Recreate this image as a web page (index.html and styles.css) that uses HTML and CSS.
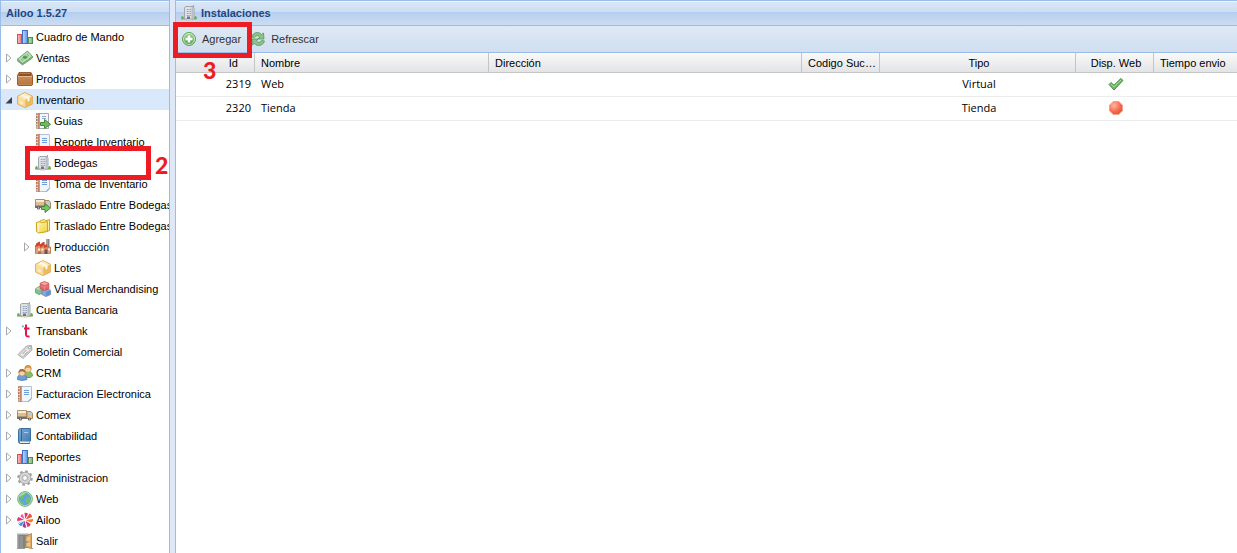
FILE: index.html
```html
<!DOCTYPE html>
<html lang="es">

<head>
  <meta charset="UTF-8" />
  <meta name="viewport" content="width=device-width, initial-scale=1" />
  <title>Ailoo</title>
  <link rel="stylesheet" href="styles.css">
</head>

<body>

  <!-- Icon set -->
  <svg class="sprite" aria-hidden="true">
    <defs>
      <linearGradient id="gGreen" x1="0" y1="0" x2="0" y2="1"><stop offset="0" stop-color="#a5d79b" /><stop offset="1" stop-color="#4fa04c" /></linearGradient>
      <linearGradient id="gBrown" x1="0" y1="0" x2="0" y2="1"><stop offset="0" stop-color="#cf9a66" /><stop offset="1" stop-color="#b5733e" /></linearGradient>
      <linearGradient id="gYellow" x1="0" y1="0" x2="1" y2="1"><stop offset="0" stop-color="#fff8b0" /><stop offset="1" stop-color="#f2d03e" /></linearGradient>
      <linearGradient id="gBlue" x1="0" y1="0" x2="1" y2="1"><stop offset="0" stop-color="#7dabd6" /><stop offset="1" stop-color="#3e77ad" /></linearGradient>
      <linearGradient id="gBarRed" x1="0" y1="0" x2="1" y2="0"><stop offset="0" stop-color="#fbc5c5" /><stop offset="1" stop-color="#f07070" /></linearGradient>
      <linearGradient id="gBarBlue" x1="0" y1="0" x2="1" y2="0"><stop offset="0" stop-color="#c3dcfb" /><stop offset="1" stop-color="#5a94ea" /></linearGradient>
      <linearGradient id="gBarGreen" x1="0" y1="0" x2="1" y2="0"><stop offset="0" stop-color="#c4e6c0" /><stop offset="1" stop-color="#78b577" /></linearGradient>
      <radialGradient id="gRed" cx=".35" cy=".3" r=".8"><stop offset="0" stop-color="#ffb8a2" /><stop offset=".6" stop-color="#f8694b" /><stop offset="1" stop-color="#e8492c" /></radialGradient>
    </defs>
    <symbol id="i-chart" viewBox="0 0 16 16">
      <rect x=".5" y="5.500" width="4" height="9" fill="url(#gBarRed)" stroke="#e04a4a" />
      <rect x="5.500" y="1.500" width="5" height="13" fill="url(#gBarBlue)" stroke="#3f70cf" />
      <rect x="11.500" y="8.500" width="4" height="6" fill="url(#gBarGreen)" stroke="#538c58" />
    </symbol>
    <symbol id="i-money" viewBox="0 0 16 16">
      <path d="m.5 11 5 4 10-7V6.500l-10 7-5-4z" fill="#8dbd8b" stroke="#61a366" stroke-width=".8" />
      <path d="M.5 9 10.500 1l5 5.500-10 7z" fill="#a9cfa2" stroke="#63a568" stroke-width=".9" />
      <path d="M2.500 9 10.300 2.800l3.200 3.700-7.800 5.500z" fill="none" stroke="#d3ebcc" stroke-width=".8" />
      <ellipse cx="8" cy="7.300" rx="2.200" ry="1.800" fill="#539d5b" />
      <path d="m4.500 9.500 1 .7M10.500 4.500l1 .8" stroke="#5ba363" />
    </symbol>
    <symbol id="i-box" viewBox="0 0 16 16">
      <path d="M2 1.500h12l1.500 3V13q0 1.500-1.500 1.500H2Q.5 14.500.5 13V4.500z" fill="url(#gBrown)" stroke="#9b5d30" />
      <path d="M2.400 2h11.200l1.200 3H1.200z" fill="#8d5127" />
      <path d="M3 2.500h10" stroke="#b67a4c" />
      <path d="M1 5.500h14" stroke="#e6b988" />
      <path d="M1 13.500h14" stroke="#c58b5b" stroke-opacity=".7" />
    </symbol>
    <symbol id="i-package" viewBox="0 0 16 16">
      <path d="m8 .6 7.300 3.600v8L8 15.500.7 12.200v-8z" fill="#f5cf7f" stroke="#dba145" stroke-width=".9" />
      <path d="M1.200 4.700 8 8v7l-6.800-3z" fill="#fadd9c" />
      <path d="M14.800 4.700 8 8v7l6.800-3z" fill="#efba58" />
      <path d="m8 1 6.800 3.400L8 7.700 1.200 4.400z" fill="#ffebbb" />
      <path d="m8 8v7" stroke="#f7d38c" stroke-width=".6" />
      <path d="m3.700 3.200 6.800 3.300v3.200l2-.9V5.400L5.700 2.200z" fill="#fffaf0" />
      <path d="m3 9.200 3 1.400v1.700l-3-1.400z" fill="#fff3cf" />
    </symbol>
    <symbol id="i-notebook" viewBox="0 0 16 16">
      <path d="M3.500.5h11v12l-2.500 3H3.500z" fill="#f2f6fc" stroke="#b3c1d4" />
      <path d="M1 0h3.500v16H1z" fill="#d39b7e" />
      <path d="M4 0v16" stroke="#b57150" />
      <path d="M1.500 1.500v14" stroke="#995b40" stroke-dasharray="1 1" />
      <path d="M0 2.500h3M0 5.500h3M0 8.500h3M0 11.500h3M0 14h3" stroke="#ece7e4" stroke-width=".8" />
      <path d="M7 4.500h5M7 6.500h5M7 8.500h5" stroke="#6f9ddc" />
      <path d="m10.500 15.500 4-4v1.500l-2.500 2.500z" fill="#8ca8cf" />
    </symbol>
    <symbol id="i-guide" viewBox="0 0 16 16">
      <path d="M3.500.5h10v15h-10z" fill="#f4f6f9" stroke="#a3a6aa" />
      <path d="M1 0h3.500v16H1z" fill="#cfa48b" />
      <path d="M4 0v16" stroke="#a36f54" />
      <path d="M1.500 1.500v14" stroke="#865a45" stroke-dasharray="1 1" />
      <path d="M0 2.500h3M0 5.500h3M0 8.500h3M0 11.500h3M0 14h3" stroke="#e9e9e9" stroke-width=".8" />
      <path d="M7 3.500h4M7 5.500h4" stroke="#8caed8" />
      <path d="M5.500 9.500h4v-3l6 4.800-6 4.200v-3h-4z" fill="#74ba5c" stroke="#3f8a3d" />
    </symbol>
    <symbol id="i-building" viewBox="0 0 16 16">
      <path d="M1 13h14l1 2H0z" fill="#a9ca97" />
      <path d="M12.500 0v3" stroke="#bd7a7a" stroke-width=".8" />
      <path d="M3.500 2.500 5 1.500h7l1 1.500v11H3.500z" fill="#dde1e6" stroke="#a2a8b0" />
      <path d="M10.500 2h2v12h-2z" fill="#b9bec6" />
      <path d="M5 4.500h5M5 6.500h5M5 8.500h5M5 10.500h5" stroke="#97a5bb" />
      <path d="M5.500 3v9M8 3v8" stroke="#e8ebef" stroke-width=".6" />
      <path d="M6 11.500h3V14H6z" fill="#6b788c" />
      <path d="M0 14c0-4 3-4 3 0zM13 14c0-4 3-4 3 0z" fill="#6cae5d" />
      <path d="M5.500 14h5v1.500h-5z" fill="#d9cbb1" />
    </symbol>
    <symbol id="i-truck" viewBox="0 0 16 16">
      <path d="M.5 3.500h9v7h-9z" fill="#dfbd90" stroke="#a58864" stroke-width=".9" />
      <path d="M1 4h8v2H1z" fill="#f7ecd9" />
      <path d="M0 9.500h10v2.500H0z" fill="#77706a" />
      <path d="M10 4.500h4l1.500 2v5H10z" fill="#f2c784" stroke="#a57d4c" stroke-width=".9" />
      <path d="M11.500 5.500H14l1 3.500h-3.500z" fill="#a9cdee" />
      <circle cx="3.500" cy="12" r="1.600" fill="#55585c" /><circle cx="12.500" cy="12" r="1.600" fill="#55585c" />
      <circle cx="3.500" cy="12" r=".7" fill="#ddd" /><circle cx="12.500" cy="12" r=".7" fill="#ddd" />
    </symbol>
    <symbol id="i-truck-go" viewBox="0 0 16 16">
      <use href="#i-truck" y="-1" width="16" height="16" />
      <path d="M6.500 9.500H10v-3l5.500 4.600-5.500 4.400v-3H6.500z" fill="#7dc264" stroke="#3f8a3d" />
    </symbol>
    <symbol id="i-folder" viewBox="0 0 16 16">
      <path d="M5.500 3.500v-1l4-1 1 1.200 4-1v11l-9 2z" fill="#fdf0a0" stroke="#cfa41d" />
      <path d="M1.500 4.500 5 3.500l1.200 1.200 6.300-1.200v10L3.500 15l-2-1.500z" fill="url(#gYellow)" stroke="#cfa41d" />
      <path d="M3.500 6v8" stroke="#fff9ca" />
    </symbol>
    <symbol id="i-factory" viewBox="0 0 16 16">
      <path d="M11 0h3.500v9H11z" fill="#858585" /><path d="M12 0v9" stroke="#c4c4c4" />
      <path d="M.5 14.500V7L4 3.500l1 2.500 4-3v3.500l3-1v2.500h3.500v6.500z" fill="#e58b6a" stroke="#b7694c" stroke-width=".8" />
      <path d="m0 8 1.500-4L5 2.500v3L8.500 3l1 .5v3L12 5.500V8l-3 1V6.500L5 9V6.500z" fill="#cf4630" />
      <path d="M1 10.500h14v4H1z" fill="#daa27a" />
      <path d="M3 9.500h2v2H3zM6.500 9.500h2v2h-2zM13 9.500h2v2h-2z" fill="#fff2d2" />
      <path d="M9.500 10.500h3V15h-3z" fill="#6c5450" /><path d="M3 12.500h3V15H3z" fill="#b06d4c" />
    </symbol>
    <symbol id="i-cubes" viewBox="0 0 16 16">
      <path d="m4 5.500 4 1.700v5L4 13.500l-3.500-1.700v-4z" fill="#83be90" stroke="#5ba06b" stroke-width=".8" />
      <path d="m4 6 3.500 1.500L4 9 .8 7.700z" fill="#b3dbb8" />
      <path d="m11 7.500 4.500 1.700v4.300l-4.500 2-4-2V9z" fill="#87a9da" stroke="#5e84bb" stroke-width=".8" />
      <path d="m11 11 4-1.500v4L11 15z" fill="#6690cc" />
      <path d="m9.500.6 4.300 1.600v5.500l-4.300 2-4.300-2V2.200z" fill="#e26668" stroke="#cb4b4c" stroke-width=".8" />
      <path d="m9.500 1 3.900 1.500-3.900 1.700-3.900-1.700z" fill="#f4a6a1" />
      <path d="m9.500 4.500v4.800M6 5l3.500 1.500L13 5" fill="none" stroke="#f08b87" stroke-width=".7" />
    </symbol>
    <symbol id="i-transbank" viewBox="0 0 16 16">
      <path d="M9 1.500v10q0 2.500 3.500 2M7 5.500h5.500" fill="none" stroke="#d91a50" stroke-width="2" />
      <path d="M5 2.500h1.700v1.700H5z" fill="#5e9ad8" />
    </symbol>
    <symbol id="i-tag" viewBox="0 0 16 16">
      <path d="M1 10.500 9.500 2l5-.5.500 4.500L6 14.500z" fill="#dcdcdc" stroke="#a2a2a2" stroke-width=".9" />
      <path d="m3 10.500 7-6.800 3 2.700-7 6.600z" fill="#efefef" stroke="#c0c0c0" stroke-width=".7" />
      <path d="m5.500 10 4-4M7 11.500l4-4" stroke="#9c9c9c" />
      <circle cx="12.700" cy="3.700" r="1.200" fill="#fff" stroke="#999" stroke-width=".8" />
    </symbol>
    <symbol id="i-users" viewBox="0 0 16 16">
      <path d="M7 11q-.5-4.500 4-4.500t4.500 4.500l-2 1.500H8z" fill="#88bc68" stroke="#5e9749" stroke-width=".8" />
      <circle cx="11" cy="4" r="3.300" fill="#f9d3a4" stroke="#ce995d" stroke-width=".8" />
      <path d="M7.700 4.200Q7.500 0 11 0t3.300 4.200Q13 2.500 11 2.500T7.700 4.200z" fill="#d29344" />
      <path d="M.5 14.500q-.5-5 4.500-5t5 5q-5 2-9.500 0z" fill="#6c9fe0" stroke="#4677ba" stroke-width=".8" />
      <circle cx="5" cy="7.800" r="3.300" fill="#f9d3a4" stroke="#c08c59" stroke-width=".8" />
      <path d="M1.700 8Q1.500 4 5 4t3.300 4Q7 6.300 5 6.300T1.700 8z" fill="#a26b3e" />
    </symbol>
    <symbol id="i-book" viewBox="0 0 16 16">
      <path d="M1.500 2.500q0-2 2-2h10v12.500l-1 .5v2h-9q-2 0-2-2z" fill="url(#gBlue)" stroke="#3c6f9f" />
      <path d="M3 13.500h9.500V15H3z" fill="#eef1ea" />
      <path d="M4.500 1v12" stroke="#346592" />
      <path d="M6.500 3.500h5v2h-5z" fill="#a8cce9" stroke="#5a8dbb" stroke-width=".8" />
    </symbol>
    <symbol id="i-gear" viewBox="0 0 16 16">
      <circle cx="8" cy="8" r="6.600" fill="none" stroke="#a3a3a3" stroke-width="2.400" stroke-dasharray="2.600 2.584" />
      <circle cx="8" cy="8" r="4.100" fill="none" stroke="#a3a3a3" stroke-width="4.200" />
      <circle cx="8" cy="8" r="4.100" fill="none" stroke="#d8d8d8" stroke-width="2.700" />
      <circle cx="8" cy="8" r="3.300" fill="none" stroke="#bdbdbd" stroke-width=".7" />
    </symbol>
    <symbol id="i-globe" viewBox="0 0 16 16">
      <circle cx="8" cy="8" r="7.400" fill="#c0e5b5" stroke="#69b168" stroke-width=".9" />
      <circle cx="8" cy="8" r="6.200" fill="#5fa5dd" />
      <path d="M3 4q3-3 6-2L8 4 6 5l1 2-2 1-2-1zM10 7l3-1 1 2-2 4-2 1-1-3-1-1zM2.500 9 6 11l1 3q-3.500-1-4.500-5z" fill="#74bd6c" />
      <path d="M3 5.500q1.500-2.700 4.500-3" fill="none" stroke="#d4efd6" />
    </symbol>
    <symbol id="i-ailoo" viewBox="0 0 16 16">
      <path d="m8 8-1-7q3-1 4 1z" fill="#ee2f62" />
      <path d="m8 8 4-6.500q3 .5 3 3.500z" fill="#f4513c" />
      <path d="m8 8 8-1.500q.5 3-2 4z" fill="#f47a2d" />
      <path d="m8 8 5.500 3.500q0 3-3 3.500z" fill="#ee2f62" />
      <path d="m8 8 1.500 7.500q-3 .8-4-1.500z" fill="#963c9a" />
      <path d="M8 8 4.500 14q-3-.5-3-3z" fill="#3d8fd6" />
      <path d="M8 8 .5 9.500q-1-3 1-4.500z" fill="#e8327f" />
      <path d="M8 8 2 4q1-3 3.500-3z" fill="#fff" />
      <path d="M8 8 3.500 4.500q0-2 2-2.500z" fill="#ef5a95" />
      <path d="M8 8 7 1M8 8l4-6.500M8 8l8-1.500M8 8l5.500 3.500M8 8l1.500 7.500M8 8l-6.500 4M8 8 .5 9.500M8 8 2 4.500" stroke="#fff" stroke-width=".8" />
    </symbol>
    <symbol id="i-door" viewBox="0 0 16 16">
      <path d="M0 .5h12V15H0z" fill="#b0b0b0" /><path d="M1.500 2H10v13H1.500z" fill="#828282" />
      <path d="M2.500 3H6v12H2.500z" fill="#929292" />
      <path d="m8.500 3.500 6-3v15l-6-1.500z" fill="#dcaa6b" stroke="#b98447" stroke-width=".9" />
      <path d="m10 5 3-1.500v4L10 8zM10 10l3-.2v3.500l-3-.6z" fill="#ebc591" />
      <path d="M9 9h1.500" stroke="#8a6435" /><path d="M0 15h8v1H0zM14 15h2v1h-2z" fill="#999" />
    </symbol>
    <symbol id="i-add" viewBox="0 0 16 16">
      <circle cx="8" cy="8" r="6.500" fill="url(#gGreen)" stroke="#62a45d" />
      <circle cx="8" cy="8" r="5.500" fill="none" stroke="#d7efd0" stroke-width=".8" />
      <path d="M8 4.500v7M4.500 8h7" stroke="#fff" stroke-width="2.400" />
    </symbol>
    <symbol id="i-refresh" viewBox="0 0 16 16">
      <path d="M1.500 6Q3 1.500 7.500 1.500q2.500 0 4 2l2-1.500.5 6H8l1.500-2Q7 3 4.500 6.500z" fill="#8ac287" stroke="#57985a" stroke-width=".8" />
      <path d="M14.500 10Q13 14.500 8.500 14.500q-2.500 0-4-2l-2 1.500L2 8h6l-1.500 2Q9 13 11.500 9.500z" fill="#8ac287" stroke="#57985a" stroke-width=".8" />
    </symbol>
    <symbol id="i-tick" viewBox="0 0 16 16">
      <path d="m1 8.500 2-2 3 2.700L12.800 2.500l2.200 2-9 9.500z" fill="#72ba67" stroke="#43893f" stroke-width=".9" />
      <path d="m3 8 3 3 7-7" fill="none" stroke="#a2d894" />
    </symbol>
    <symbol id="i-stop" viewBox="0 0 16 16">
      <path d="M5.200 1.500h5.600l3.700 3.700v5.600l-3.700 3.700H5.200l-3.700-3.700V5.200z" fill="url(#gRed)" stroke="#eda294" />
    </symbol>
    <symbol id="i-closed" viewBox="0 0 16 16">
      <path d="M5.500 4v8l4.500-4z" fill="#fff" stroke="#a8a8a8" />
    </symbol>
    <symbol id="i-open" viewBox="0 0 16 16">
      <path d="M11 5v6.500H4.500z" fill="#404040" />
    </symbol>
  </svg>

  <nav class="sidebar" aria-label="Menú">
    <h2 class="panel-header">Ailoo 1.5.27</h2>
    <ul class="tree">
      <li><a href="#"><i class="icon"></i><svg class="icon"><use href="#i-chart" /></svg><span>Cuadro de Mando</span></a></li>
      <li><a href="#"><svg class="icon"><use href="#i-closed" /></svg><svg class="icon"><use href="#i-money" /></svg><span>Ventas</span></a></li>
      <li><a href="#"><svg class="icon"><use href="#i-closed" /></svg><svg class="icon"><use href="#i-box" /></svg><span>Productos</span></a></li>
      <li>
        <a href="#" class="selected"><svg class="icon"><use href="#i-open" /></svg><svg class="icon"><use href="#i-package" /></svg><span>Inventario</span></a>
        <ul>
          <li><a href="#"><i class="icon"></i><svg class="icon"><use href="#i-guide" /></svg><span>Guias</span></a></li>
          <li><a href="#"><i class="icon"></i><svg class="icon"><use href="#i-notebook" /></svg><span>Reporte Inventario</span></a></li>
          <li class="step">
            <a href="#"><i class="icon"></i><svg class="icon"><use href="#i-building" /></svg><span>Bodegas</span></a>
            <div class="mark mark-menu"></div>
            <b class="number number-menu">2</b>
          </li>
          <li><a href="#"><i class="icon"></i><svg class="icon"><use href="#i-notebook" /></svg><span>Toma de Inventario</span></a></li>
          <li><a href="#"><i class="icon"></i><svg class="icon"><use href="#i-truck-go" /></svg><span>Traslado Entre Bodegas</span></a></li>
          <li><a href="#"><i class="icon"></i><svg class="icon"><use href="#i-folder" /></svg><span>Traslado Entre Bodegas</span></a></li>
          <li><a href="#"><svg class="icon"><use href="#i-closed" /></svg><svg class="icon"><use href="#i-factory" /></svg><span>Producción</span></a></li>
          <li><a href="#"><i class="icon"></i><svg class="icon"><use href="#i-package" /></svg><span>Lotes</span></a></li>
          <li><a href="#"><i class="icon"></i><svg class="icon"><use href="#i-cubes" /></svg><span>Visual Merchandising</span></a></li>
        </ul>
      </li>
      <li><a href="#"><i class="icon"></i><svg class="icon"><use href="#i-building" /></svg><span>Cuenta Bancaria</span></a></li>
      <li><a href="#"><svg class="icon"><use href="#i-closed" /></svg><svg class="icon"><use href="#i-transbank" /></svg><span>Transbank</span></a></li>
      <li><a href="#"><i class="icon"></i><svg class="icon"><use href="#i-tag" /></svg><span>Boletin Comercial</span></a></li>
      <li><a href="#"><svg class="icon"><use href="#i-closed" /></svg><svg class="icon"><use href="#i-users" /></svg><span>CRM</span></a></li>
      <li><a href="#"><svg class="icon"><use href="#i-closed" /></svg><svg class="icon"><use href="#i-notebook" /></svg><span>Facturacion Electronica</span></a></li>
      <li><a href="#"><svg class="icon"><use href="#i-closed" /></svg><svg class="icon"><use href="#i-truck" /></svg><span>Comex</span></a></li>
      <li><a href="#"><svg class="icon"><use href="#i-closed" /></svg><svg class="icon"><use href="#i-book" /></svg><span>Contabilidad</span></a></li>
      <li><a href="#"><svg class="icon"><use href="#i-closed" /></svg><svg class="icon"><use href="#i-chart" /></svg><span>Reportes</span></a></li>
      <li><a href="#"><svg class="icon"><use href="#i-closed" /></svg><svg class="icon"><use href="#i-gear" /></svg><span>Administracion</span></a></li>
      <li><a href="#"><svg class="icon"><use href="#i-closed" /></svg><svg class="icon"><use href="#i-globe" /></svg><span>Web</span></a></li>
      <li><a href="#"><svg class="icon"><use href="#i-closed" /></svg><svg class="icon"><use href="#i-ailoo" /></svg><span>Ailoo</span></a></li>
      <li><a href="#"><i class="icon"></i><svg class="icon"><use href="#i-door" /></svg><span>Salir</span></a></li>
    </ul>
  </nav>

  <main class="content">
    <h1 class="panel-header"><svg class="icon"><use href="#i-building" /></svg>Instalaciones</h1>

    <div class="toolbar">
      <div class="step">
        <button type="button"><svg class="icon"><use href="#i-add" /></svg>Agregar</button>
        <div class="mark mark-button"></div>
        <b class="number number-button">3</b>
      </div>
      <button type="button"><svg class="icon"><use href="#i-refresh" /></svg>Refrescar</button>
    </div>

    <table class="grid">
      <colgroup>
        <col class="col-id">
        <col class="col-name">
        <col>
        <col class="col-small">
        <col class="col-type">
        <col class="col-small">
        <col class="col-time">
      </colgroup>
      <thead>
        <tr>
          <th class="id">Id</th>
          <th>Nombre</th>
          <th>Dirección</th>
          <th>Codigo Sucursal</th>
          <th class="center">Tipo</th>
          <th class="center">Disp. Web</th>
          <th>Tiempo envio</th>
        </tr>
      </thead>
      <tbody>
        <tr>
          <td class="id">2319</td>
          <td>Web</td>
          <td></td>
          <td></td>
          <td class="center">Virtual</td>
          <td class="center"><svg class="icon" role="img" aria-label="Sí"><use href="#i-tick" /></svg></td>
          <td></td>
        </tr>
        <tr>
          <td class="id">2320</td>
          <td>Tienda</td>
          <td></td>
          <td></td>
          <td class="center">Tienda</td>
          <td class="center"><svg class="icon" role="img" aria-label="No"><use href="#i-stop" /></svg></td>
          <td></td>
        </tr>
      </tbody>
    </table>
  </main>

</body>

</html>
```
FILE: styles.css
```css
* {
  box-sizing: border-box;
}

body {
  display: flex;
  gap: 5px;
  min-height: 100vh;
  margin: 0;
  background-color: #dfe8f6;
  color: #000;
  font-family: "Liberation Sans", Arial, sans-serif;
  font-size: 11px;
}

.sprite {
  position: absolute;
  width: 0;
  height: 0;
}

.icon {
  display: block;
  flex: none;
  width: 16px;
  height: 16px;
}

.panel-header {
  display: flex;
  align-items: center;
  gap: 4px;
  height: 26px;
  margin: 0;
  padding: 0 5px;
  border-top: 1px solid #99bce8;
  border-bottom: 1px solid #99bce8;
  background: linear-gradient(#dae7f6, #cddef3 45%, #b3cdee 46%, #b8cfee 51%, #cbddf3);
  box-shadow: inset 0 1px #f1f6fc;
  color: #1c4782;
  font-size: 11px;
  font-weight: bold;
}

/* Sidebar tree */
.sidebar {
  flex: none;
  width: 170px;
  border: solid #99bce8;
  border-width: 0 1px;
  background-color: #fff;
}

.tree,
.tree ul {
  margin: 0;
  padding: 0;
  list-style: none;
}

.tree {
  overflow: hidden;
}

.tree a {
  display: flex;
  align-items: center;
  height: 21px;
  color: #000;
  text-decoration: none;
  white-space: nowrap;
}

.tree a span {
  padding-left: 3px;
}

.tree ul a {
  padding-left: 18px;
}

.tree .selected {
  background-color: #d9e8fb;
}

/* Main panel */
.content {
  flex: 1;
  min-width: 0;
  border-left: 1px solid #99bce8;
  background-color: #fff;
}

.toolbar {
  display: flex;
  align-items: center;
  height: 27px;
  padding: 0 5px;
  gap: 9px;
  border-bottom: 1px solid #99bce8;
  background: linear-gradient(#dfe9f5, #d0deef);
}

.toolbar button {
  display: flex;
  align-items: center;
  gap: 5px;
  padding: 0;
  border: none;
  background: none;
  color: #333;
  font: inherit;
  cursor: pointer;
}

/* Grid */
.grid {
  width: 100%;
  table-layout: fixed;
  border-collapse: separate;
  border-spacing: 0;
}

.col-id {
  width: 79px;
}

.col-name {
  width: 234px;
}

.col-small {
  width: 78px;
}

.col-type {
  width: 196px;
}

.col-time {
  width: 83px;
}

.grid th {
  height: 20px;
  padding: 0 3px 0 6px;
  border-right: 1px solid #c5c5c5;
  border-bottom: 1px solid #c5c5c5;
  background: linear-gradient(#f9f9f9, #e3e4e6);
  font-weight: normal;
  text-align: left;
  white-space: nowrap;
  overflow: hidden;
  text-overflow: ellipsis;
}

.grid th:last-child {
  border-right: none;
}

.grid td {
  height: 24px;
  padding: 0 4px 2px 6px;
  border-bottom: 1px solid #ededed;
  font-family: "Open Sans", sans-serif;
}

.grid .id {
  text-align: right;
}

.grid th.id {
  padding-right: 16px;
}

.grid .center {
  text-align: center;
}

.grid td .icon {
  margin: 0 auto;
}

/* Step marks */
.step {
  position: relative;
}

.mark {
  position: absolute;
  z-index: 1;
  border: 5px solid #ed1c24;
  pointer-events: none;
}

.mark-menu {
  top: -6px;
  left: 24px;
  width: 126px;
  height: 34px;
}

.mark-button {
  top: -9px;
  left: -8px;
  width: 79px;
  height: 36px;
}

.number {
  position: absolute;
  z-index: 1;
  color: #ed1c24;
  font-family: Lato, sans-serif;
  font-size: 23px;
  font-weight: 900;
  line-height: 24px;
}

.number-menu {
  top: 1px;
  left: 154px;
}

.number-button {
  top: 27px;
  left: 22px;
}
```
